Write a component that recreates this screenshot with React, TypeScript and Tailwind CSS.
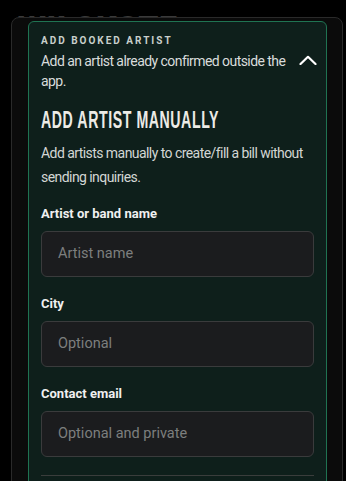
const fields = [
  { label: "Artist or band name", placeholder: "Artist name" },
  { label: "City", placeholder: "Optional" },
  { label: "Contact email", placeholder: "Optional and private" },
];

export default function App() {
  return (
    <div
      className="h-[481px] w-[346px] overflow-hidden bg-black"
      style={{ fontFamily: "Roboto, 'Noto Sans', sans-serif" }}
    >
      {/* profile header, mostly scrolled away under the sheet */}
      <div className="h-[17px] overflow-hidden px-[18px]">
        <div className="-mt-[11px]">
          <p className="text-[11px] font-medium uppercase leading-[14px] tracking-[0.2em] text-[#4a4a4a]">Profile name</p>
          <p className="mt-[8px] text-[32px] font-black uppercase leading-none tracking-wide text-[#3a3a3a]">
            Wilckste
          </p>
        </div>
      </div>

      <div className="ml-[11px] mr-[3px] rounded-lg border border-[#2a2a2a] bg-[#0b0b0b] pb-4 pl-4 pr-[15px] pt-[3px]">
        <div className="rounded-md border border-[#1f7352] bg-[#0e1f1b] px-3 pt-[12px] pb-6">
          <div className="flex items-start justify-between gap-3">
            <div>
              <p className="text-[10px] font-bold uppercase leading-[14px] tracking-[0.2em] text-[#c9cfcc]">Add booked artist</p>
              <p className="mt-[3px] text-[14px] leading-[20px] tracking-[-0.04em] text-[#d9dcdb]">
                Add an artist already confirmed outside the app.
              </p>
            </div>
            <svg viewBox="0 0 18 10" className="-mr-[3px] mt-[21px] h-[10px] w-[18px] shrink-0" fill="none">
              <polyline points="1.5,9 9,1.8 16.5,9" stroke="white" strokeWidth="2.2" strokeLinecap="round" strokeLinejoin="round" />
            </svg>
          </div>

          <h2
            className="mt-[15px] origin-left scale-x-[0.59] whitespace-nowrap text-[24px] font-bold uppercase leading-[28px] tracking-[0.04em] text-[#ecebe6]"
            style={{ fontFamily: "'Liberation Sans', Arial, sans-serif" }}
          >
            Add artist manually
          </h2>
          <p className="mt-[7px] text-[14px] leading-[24px] tracking-[-0.04em] text-[#d3d6d4]">
            Add artists manually to create/fill a bill without sending inquiries.
          </p>

          <div className="mt-[16px] flex flex-col gap-[18px]">
            {fields.map((f) => (
              <div key={f.label}>
                <label className="block text-[13px] font-bold leading-[18px] text-[#f0f0f0]">{f.label}</label>
                <div className="mt-[8px] flex h-[46px] items-center rounded-md border border-[#3a3b3c] bg-[#1b1c1e] px-4 text-[14.5px] text-[#7d7f7e]">
                  {f.placeholder}
                </div>
              </div>
            ))}
          </div>

          <div className="mt-[18px] h-px bg-[#3a3d3c]" />
        </div>
      </div>
    </div>
  );
}
